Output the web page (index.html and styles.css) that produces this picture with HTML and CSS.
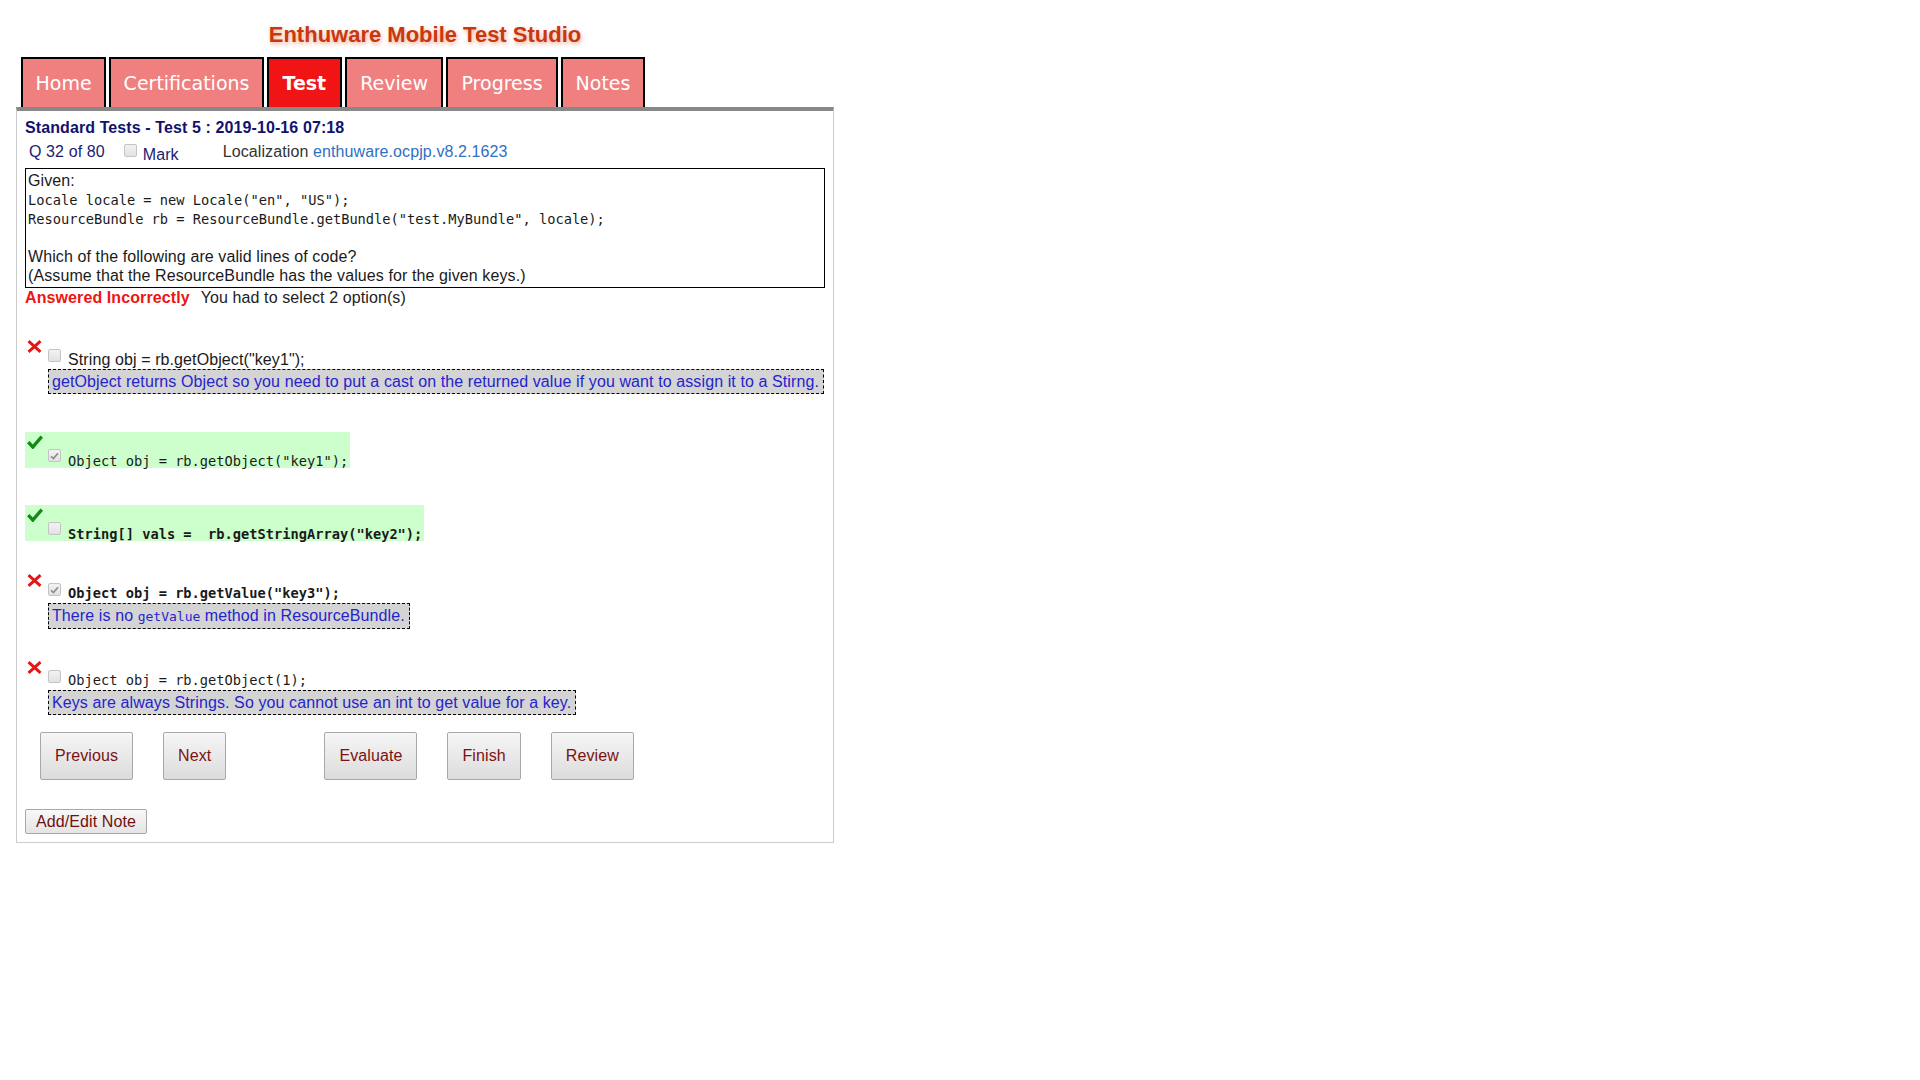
FILE: index.html
```html
<!DOCTYPE html>
<html>
<head>
<meta charset="utf-8">
<title>Enthuware Mobile Test Studio</title>
<link rel="stylesheet" href="styles.css">
</head>
<body>
<div class="app">
  <div class="title">Enthuware Mobile Test Studio</div>
  <div class="tabs">
    <div class="tab">Home</div>
    <div class="tab">Certifications</div>
    <div class="tab active">Test</div>
    <div class="tab wide">Review</div>
    <div class="tab mid">Progress</div>
    <div class="tab mid">Notes</div>
  </div>
  <div class="panel">
    <div class="test-name">Standard Tests - Test 5 : 2019-10-16 07:18</div>
    <div class="qinfo"><span class="qnum">Q 32 of 80</span><span class="cb mark-cb"></span><span class="mark">Mark</span><span class="loc">Localization <span class="loc-link">enthuware.ocpjp.v8.2.1623</span></span></div>
    <div class="question">
      <div class="qline">Given:</div>
      <div class="code">
        <div class="code-line">Locale locale = new Locale("en", "US");</div>
        <div class="code-line">ResourceBundle rb = ResourceBundle.getBundle("test.MyBundle", locale);</div>
        <div class="code-blank"></div>
      </div>
      <div class="qline">Which of the following are valid lines of code?</div>
      <div class="qline">(Assume that the ResourceBundle has the values for the given keys.)</div>
    </div>
    <div class="result"><span class="wrong-text">Answered Incorrectly</span><span class="result-note">You had to select 2 option(s)</span></div>

    <div class="opt">
      <div class="icon-col">
        <svg class="xicon" width="15" height="13" viewBox="0 0 15 13"><path d="M1.5 1.2 L13.5 11.8 M13.5 1.2 L1.5 11.8" stroke="#e81515" stroke-width="3" fill="none"/></svg>
      </div>
      <div class="opt-body">
        <div class="row"><span class="cb"></span><span class="txt">String obj = rb.getObject("key1");</span></div>
        <div class="expl">getObject returns Object so you need to put a cast on the returned value if you want to assign it to a Stirng.</div>
      </div>
    </div>

    <div class="opt correct">
      <div class="icon-col">
        <svg class="chk" width="16" height="14" viewBox="0 0 16 14"><path d="M1.3 7.2 L5.8 12 L14.8 1.6" stroke="#138a13" stroke-width="3.4" fill="none"/></svg>
      </div>
      <div class="opt-body">
        <div class="row"><span class="cb on"><svg width="9" height="8" viewBox="0 0 9 8"><path d="M1 4.2 L3.4 6.6 L8 1.2" stroke="#8a8a8a" stroke-width="1.6" fill="none"/></svg></span><span class="txt mono">Object obj = rb.getObject("key1");</span></div>
      </div>
    </div>

    <div class="opt correct">
      <div class="icon-col">
        <svg class="chk" width="16" height="14" viewBox="0 0 16 14"><path d="M1.3 7.2 L5.8 12 L14.8 1.6" stroke="#138a13" stroke-width="3.4" fill="none"/></svg>
      </div>
      <div class="opt-body">
        <div class="row"><span class="cb"></span><span class="txt mono bold">String[] vals =&nbsp; rb.getStringArray("key2");</span></div>
      </div>
    </div>

    <div class="opt">
      <div class="icon-col">
        <svg class="xicon" width="15" height="13" viewBox="0 0 15 13"><path d="M1.5 1.2 L13.5 11.8 M13.5 1.2 L1.5 11.8" stroke="#e81515" stroke-width="3" fill="none"/></svg>
      </div>
      <div class="opt-body">
        <div class="row"><span class="cb on"><svg width="9" height="8" viewBox="0 0 9 8"><path d="M1 4.2 L3.4 6.6 L8 1.2" stroke="#8a8a8a" stroke-width="1.6" fill="none"/></svg></span><span class="txt mono bold">Object obj = rb.getValue("key3");</span></div>
        <div class="expl">There is no <code>getValue</code> method in ResourceBundle.</div>
      </div>
    </div>

    <div class="opt">
      <div class="icon-col">
        <svg class="xicon" width="15" height="13" viewBox="0 0 15 13"><path d="M1.5 1.2 L13.5 11.8 M13.5 1.2 L1.5 11.8" stroke="#e81515" stroke-width="3" fill="none"/></svg>
      </div>
      <div class="opt-body">
        <div class="row"><span class="cb"></span><span class="txt mono">Object obj = rb.getObject(1);</span></div>
        <div class="expl">Keys are always Strings. So you cannot use an int to get value for a key.</div>
      </div>
    </div>

    <div class="buttons">
      <button class="btn">Previous</button>
      <button class="btn">Next</button>
      <span class="btn-spacer"></span>
      <button class="btn">Evaluate</button>
      <button class="btn">Finish</button>
      <button class="btn">Review</button>
    </div>
    <button class="note-btn">Add/Edit Note</button>
  </div>
</div>
</body>
</html>
```
FILE: styles.css
```css
html, body {
  margin: 0;
  padding: 0;
  background: #ffffff;
}
body {
  font-family: "Liberation Sans", Arial, sans-serif;
  font-size: 16px;
  letter-spacing: 0.1px;
  color: #1a1a1a;
}
.app {
  width: 818px;
  margin-left: 16px;
}
.title {
  padding-top: 22px;
  margin-bottom: 9px;
  text-align: center;
  font-weight: bold;
  font-size: 22px;
  line-height: 26px;
  letter-spacing: 0;
  color: #c8380f;
  text-shadow: 1px 2px 4px rgba(230, 100, 60, 0.55);
}
.tabs {
  display: flex;
  gap: 3px;
  padding-left: 5px;
  height: 50px;
}
.tab {
  border: 2px solid #000;
  border-bottom: none;
  background: #f08080;
  color: #ffffff;
  font-family: "DejaVu Sans", Verdana, sans-serif;
  font-size: 19px;
  line-height: 48px;
  letter-spacing: 0;
  padding: 0 12.5px;
}
.tab.active {
  background: #f01414;
  font-weight: bold;
  padding: 0 13.5px;
}
.tab.wide {
  padding: 0 13.5px;
}
.tab.mid {
  padding: 0 13px;
}
.panel {
  border: 1px solid #cccccc;
  border-top: 4px solid #888888;
  padding: 0 8px 8px 8px;
}
.test-name {
  margin-top: 6px;
  font-weight: bold;
  line-height: 21px;
  color: #12126e;
}
.qinfo {
  height: 26px;
  padding-top: 4px;
  line-height: 20px;
  white-space: nowrap;
}
.qnum {
  padding-left: 4px;
  color: #1c1c70;
}
.mark-cb {
  margin-left: 19px;
  vertical-align: 0px;
}
.mark {
  margin-left: 6px;
  color: #1c1c70;
  vertical-align: -3px;
}
.loc {
  margin-left: 44px;
  color: #333333;
}
.loc-link {
  color: #2f6fc4;
}
.question {
  border: 1px solid #000;
  padding: 2px 2px;
  line-height: 19px;
  color: #1a1a1a;
}
.code {
  margin-top: 1px;
  font-family: "DejaVu Sans Mono", Consolas, monospace;
  font-size: 13.7px;
  letter-spacing: 0;
  line-height: 19px;
}
.code-line {
  white-space: pre;
}
.code-blank {
  height: 18px;
}
.result {
  line-height: 20px;
}
.wrong-text {
  font-weight: bold;
  color: #ee1515;
}
.result-note {
  margin-left: 11px;
  color: #222222;
}
.opt {
  display: flex;
  margin-top: 32px;
}
.opt.correct {
  width: fit-content;
  background: #ccffcc;
  height: 36px;
  margin-top: 38px;
}
.opt.correct + .opt.correct {
  margin-top: 37px;
}
.opt.correct + .opt:not(.correct) {
  margin-top: 33px;
}
.icon-col {
  width: 23px;
  flex: none;
  padding-left: 2px;
  box-sizing: border-box;
}
.xicon {
  display: block;
}
.chk {
  display: block;
  margin-top: 3px;
}
.opt-body {
  display: flex;
  flex-direction: column;
  align-items: flex-start;
}
.row {
  display: flex;
  align-items: flex-end;
  height: 29px;
  white-space: pre;
}
.opt.correct .row {
  height: 36px;
  padding-right: 2px;
}
.cb {
  display: inline-block;
  box-sizing: border-box;
  width: 13px;
  height: 13px;
  border: 1px solid #c4c4c4;
  border-radius: 2px;
  background: linear-gradient(#f2f2f2, #e2e2e2);
  position: relative;
}
.cb.on svg {
  position: absolute;
  left: 1px;
  top: 2px;
}
.row .cb {
  margin-right: 7px;
  margin-bottom: 7px;
}
.opt.correct .row .cb {
  margin-bottom: 6px;
}
.txt {
  line-height: 18px;
  color: #1a1a1a;
}
.txt.mono {
  font-family: "DejaVu Sans Mono", Consolas, monospace;
  font-size: 13.7px;
  letter-spacing: 0;
  line-height: 14px;
  margin-bottom: 3px;
}
.opt.correct .txt.mono {
  margin-bottom: 0;
}
.txt.bold {
  font-weight: bold;
}
.expl {
  border: 1px dashed #000;
  background: #d4d4d4;
  color: #2424cc;
  line-height: 23px;
  padding: 0 4px 0 3px;
  white-space: nowrap;
}
.expl code {
  font-family: "DejaVu Sans Mono", Consolas, monospace;
  font-size: 13px;
  letter-spacing: 0;
}
.buttons {
  display: flex;
  margin-top: 17px;
}
.btn {
  margin: 0 15px;
  height: 48px;
  padding: 0 14px;
  border: 1px solid #a8a8a8;
  border-radius: 2px;
  background: linear-gradient(#f6f6f6, #dcdcdc);
  font-family: "Liberation Sans", Arial, sans-serif;
  font-size: 16px;
  letter-spacing: 0.1px;
  color: #7a1212;
}
.btn-spacer {
  width: 68px;
  flex: none;
}
.note-btn {
  display: block;
  margin-top: 29px;
  height: 25px;
  padding: 0 10px;
  border: 1px solid #a8a8a8;
  border-radius: 2px;
  background: linear-gradient(#f8f8f8, #e4e4e4);
  font-family: "Liberation Sans", Arial, sans-serif;
  font-size: 16px;
  letter-spacing: 0.1px;
  color: #6e1212;
}
```
